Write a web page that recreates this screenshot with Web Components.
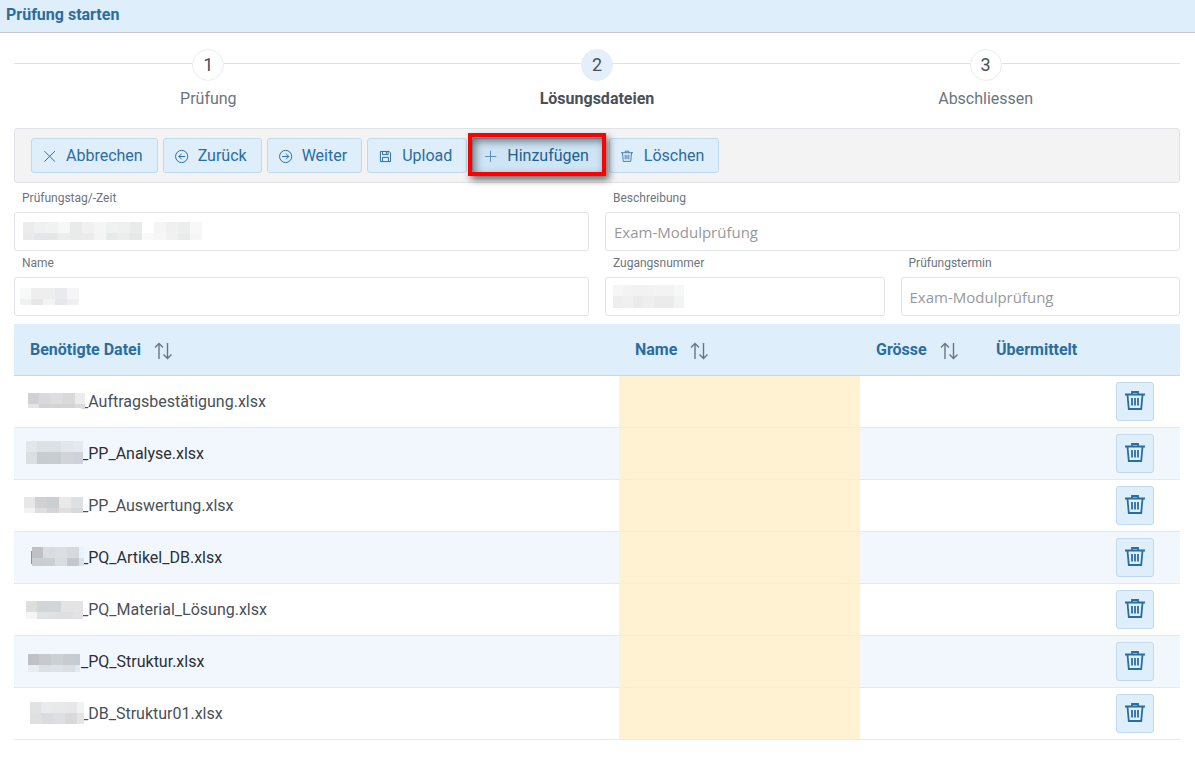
<!DOCTYPE html>
<html lang="de">
<head>
<meta charset="utf-8">
<meta name="viewport" content="width=device-width, initial-scale=1">
<title>Prüfung starten</title>
<style>
  :root {
    --accent: #2a6da0;
    --accent-bg: #dfeefb;
    --accent-line: #c0d9ec;
    --line: #dee2e6;
    --muted: #6c757d;
    --text: #495057;
  }
  body { margin: 0; background: #fff; color: var(--text); font: 16px/20px Roboto, "Liberation Sans", sans-serif; }
</style>
</head>
<body>
<exam-page></exam-page>

<script>
const define = (name, html, setup) => {
  const template = document.createElement('template');
  template.innerHTML = html;
  customElements.define(name, class extends HTMLElement {
    connectedCallback() {
      if (this.shadowRoot) return;
      const root = this.attachShadow({ mode: 'open' });
      root.append(template.content.cloneNode(true));
      if (setup) setup(this, root);
    }
  });
};

const ICONS = {
  close: '<path d="M2 3l15 15M17 3l-15 15"/>',
  plus: '<path d="M9.300 2.500v16M1.500 10.700h16"/>',
  left: '<circle cx="9.500" cy="10.700" r="8.700"/><path d="M14.500 10.700H5.500M9.500 6.700l-4 4 4 4"/>',
  right: '<circle cx="9.500" cy="10.700" r="8.700"/><path d="M4.500 10.700h9.500M10 6.700l4 4-4 4"/>',
  save: '<path d="M2 3.500h12.500l2 2v12.500h-14.500zM5 3.500v4.500h8v-4.500M10.500 4v3M5 18v-6h8.500v6"/>',
  trash: '<path d="M0 4.500h20M7 4V2h6v2M2.500 5l1.300 14h12.400l1.300-14M7 8v7.500M10 8v7.500M13 8v7.500"/>',
  sort: '<path d="M6 18V2.500M2 6.500l4-4 4 4M14.500 2v15.500M10.500 13.500l4 4 4-4"/>'
};

define('line-icon', `
  <style>
    :host { display: inline-block; width: 14px; height: 14px; flex: none; }
    svg { display: block; width: 100%; height: 100%; fill: none; stroke: currentColor; stroke-width: var(--stroke, 1.4); overflow: visible; }
  </style>
  <svg viewBox="0 0 20 20" aria-hidden="true"></svg>`,
  (host, root) => { root.querySelector('svg').innerHTML = ICONS[host.getAttribute('name')]; });

/* Obscured text: xs and ys list the tile edges, colors the fills row by row. */
define('masked-text', `
  <style>
    :host { display: block; }
    svg { display: block; }
  </style>
  <svg aria-hidden="true" shape-rendering="crispEdges"></svg>`,
  (host, root) => {
    const list = n => host.getAttribute(n).split(' ');
    const xs = list('xs').map(Number), ys = list('ys').map(Number), colors = list('colors');
    const svg = root.querySelector('svg'), cols = xs.length - 1;
    svg.setAttribute('width', xs[cols]);
    svg.setAttribute('height', ys[ys.length - 1]);
    svg.innerHTML = colors.map((c, i) => {
      const x = i % cols, y = Math.floor(i / cols);
      return `<rect x="${xs[x]}" y="${ys[y]}" width="${xs[x + 1] - xs[x]}" height="${ys[y + 1] - ys[y]}" fill="#${c}"/>`;
    }).join('');
  });

define('page-title', `
  <style>
    :host { display: block; background: var(--accent-bg); border-bottom: 1px solid #c4c8cc; padding: 5px 6px 7px; }
    h1 { margin: 0; font-size: 16px; line-height: 20px; font-weight: 700; color: var(--accent); }
  </style>
  <h1><slot></slot></h1>`);

define('step-list', `
  <style>
    :host { display: block; }
    ol { display: flex; margin: 0; padding: 0; list-style: none; }
  </style>
  <ol role="list"><slot></slot></ol>`);

define('step-item', `
  <style>
    :host { flex: 1; display: grid; grid-template-columns: 1fr 32px 1fr; row-gap: 8px; color: var(--muted); }
    .line { height: 1px; margin-top: 14px; background: var(--line); }
    .number { box-sizing: border-box; height: 32px; border: 1px solid #e9ecef; border-radius: 50%; font-size: 18px; line-height: 30px; text-align: center; color: var(--text); }
    .label { grid-column: 1 / -1; text-align: center; }
    :host([active]) .number { background: #e3f0fb; }
    :host([active]) .label { font-weight: 700; color: var(--text); }
  </style>
  <div class="line"></div><div class="number"></div><div class="line"></div>
  <div class="label"><slot></slot></div>`,
  (host, root) => {
    host.setAttribute('role', 'listitem');
    root.querySelector('.number').textContent = host.getAttribute('number');
  });

define('tool-bar', `
  <style>
    :host { display: flex; flex-wrap: wrap; gap: 5px; padding: 9px 16px; background: #f3f3f3; border: 1px solid var(--line); border-radius: 3px; }
  </style>
  <slot></slot>`);

define('action-button', `
  <style>
    :host { display: block; position: relative; }
    button { display: flex; align-items: center; gap: 9px; height: 35px; padding: 0 14px 0 11px; border: 1px solid var(--accent-line); border-radius: 3px; background: var(--accent-bg); color: var(--accent); font: inherit; cursor: pointer; }
    button:hover { background: #d0e6f7; }
    line-icon[name="trash"] { width: 12px; height: 12px; margin: 1px 2px 0 0; }
    :host([marked]) { z-index: 1; }
    :host([marked]) button { background: #cfe5f6; border-color: #9dc3df; color: #22608f; }
    :host([marked]) line-icon { color: #5a8fba; }
    :host([marked])::after { content: ""; position: absolute; inset: -5px -2px -3px -4px; border: 4px solid #f00; box-shadow: 3px 4px 7px rgba(0,0,0,.55), inset 3px 4px 8px rgba(0,0,0,.5); pointer-events: none; }
  </style>
  <button type="button"><line-icon></line-icon><slot></slot></button>`,
  (host, root) => {
    const icon = document.createElement('line-icon');
    icon.setAttribute('name', host.getAttribute('icon'));
    root.querySelector('line-icon').replaceWith(icon);
  });

define('form-field', `
  <style>
    :host { display: block; min-width: 0; }
    label { display: block; padding: 0 8px 2px; font-size: 12px; line-height: 24px; color: var(--muted); }
    .box { position: relative; }
    input { display: block; box-sizing: border-box; width: 100%; height: 39px; padding: 1px 8px 0; border: 1px solid #e2e3e8; border-radius: 3px; background: #fff; color: #96999d; font: 15px/20px "Open Sans", "Noto Sans", sans-serif; }
    ::slotted(*) { position: absolute; left: 0; top: 0; pointer-events: none; }
  </style>
  <label for="field"></label>
  <div class="box"><input id="field" type="text"><slot></slot></div>`,
  (host, root) => {
    root.querySelector('label').textContent = host.getAttribute('label');
    root.querySelector('input').value = host.getAttribute('value') || '';
  });

const FILES = [
  ['_Auftragsbestätigung.xlsx', '4 15 27 39 51 61', '11 22 26', 'd0d1d4 dadadc dedee1 d9d9d9 ececee e4e4e4 d3d3d4 d4d4d5 d3d3d4 dadbdc'],
  ['_PP_Analyse.xlsx', '2 13 25 37 49 59', '7 18 30', 'e2e7eb dce1e5 dae2e6 e2e7ed e4e9f2 dadfe2 c7cccf c8cdd0 d1d5da ced3d9'],
  ['_PP_Auswertung.xlsx', '0 11 23 35 47 59', '11 22 27', 'e7e7e8 d1d1d3 cccfd2 e9e9ea dfe0e5 f3f3f3 dededf d5d5d7 e0e0e1 d8d9dc'],
  ['_PQ_Artikel_DB.xlsx', '7 8 19 31 43 55 60', '9 13 20 26 28', 'f2f7fe bfc1c6 d9dde1 dcdfe2 d5dade e7f3fe b98a5c bfc1c6 d9dde1 dcdfe2 d5dade e7f3fe b98a5c cacdd2 cbcfd1 d8dde3 c5c7cc d9e1e9 f2f7fe cacdd2 cbcfd1 d8dde3 c5c7cc d9e1e9'],
  ['_PQ_Material_Lösung.xlsx', '2 13 25 37 49 59', '11 22 29', 'dededd d2d5d7 d3d6d9 e4e4e5 e4e4e6 f5f5f3 e1e2e4 dfe0e2 dfdfe1 e2e2e4'],
  ['_PQ_Struktur.xlsx', '4 15 27 39 51 56', '12 23 30', 'bfc1c6 c6c9cd cad0d4 c8cbd0 c5cbd3 e8edf2 dbe0e6 dde2e8 dadfe3 e2e8ef'],
  ['_DB_Struktur01.xlsx', '6 17 29 41 53 60', '8 19 30', 'e1e2e2 e9eaec e8e9eb e7e7e9 f1f2f2 e0e0e1 dbdcdf dedfe2 d9d9db e4e4e5']
];

define('file-table', `
  <style>
    :host { display: block; }
    table { width: 100%; table-layout: fixed; border-collapse: separate; border-spacing: 0; }
    th { box-sizing: border-box; height: 52px; padding: 0 16px; text-align: left; font-weight: 700; color: var(--accent); background: var(--accent-bg); border-bottom: 1px solid var(--accent-line); }
    th button { display: flex; align-items: center; gap: 12px; padding: 0; border: 0; background: none; color: inherit; font: inherit; cursor: pointer; }
    th line-icon { width: 20px; height: 20px; margin-top: 2px; color: var(--muted); }
    .name { width: 241px; } .size { width: 120px; } .sent { width: 120px; } .tools { width: 80px; }
    td { padding: 6px 16px; border-bottom: 1px solid #e4e9ed; }
    tr:nth-child(even) td { background: #f2f7fe; color: #2b3035; }
    tbody td.file { padding-left: 10px; }
    tbody tr td.mark { background: #fff2d3; border-color: #fbeccf; }
    .cell { display: flex; height: 39px; }
    .cell span { line-height: 39px; }
    masked-text { position: relative; flex: none; width: 60px; margin-right: -3px; }
    td button { display: flex; justify-content: center; width: 38px; height: 39px; padding: 6px 0 0; border: 1px solid var(--accent-line); border-radius: 3px; background: var(--accent-bg); color: var(--accent); cursor: pointer; }
    td line-icon { width: 20px; height: 22px; --stroke: 1.8; }
  </style>
  <table>
    <thead><tr>
      <th scope="col"><button type="button">Benötigte Datei<line-icon name="sort"></line-icon></button></th>
      <th scope="col" class="name"><button type="button">Name<line-icon name="sort"></line-icon></button></th>
      <th scope="col" class="size"><button type="button">Grösse<line-icon name="sort"></line-icon></button></th>
      <th scope="col" class="sent">Übermittelt</th>
      <th class="tools"></th>
    </tr></thead>
    <tbody></tbody>
  </table>`,
  (host, root) => {
    root.querySelector('tbody').innerHTML = FILES.map(([name, xs, ys, colors]) => `
      <tr>
        <td class="file"><div class="cell"><masked-text xs="${xs}" ys="${ys}" colors="${colors}"></masked-text><span>${name}</span></div></td>
        <td class="mark"></td><td></td><td></td>
        <td><button type="button" aria-label="Löschen"><line-icon name="trash"></line-icon></button></td>
      </tr>`).join('');
  });

define('exam-page', `
  <style>
    :host { display: block; }
    main { padding: 16px 15px 24px 14px; }
    tool-bar { margin-top: 19px; }
    .fields { display: grid; grid-template-columns: 1fr 1fr; column-gap: 16px; margin: 3px 0 8px; }
    .pair { display: grid; grid-template-columns: 1fr 1fr; column-gap: 16px; }
  </style>
  <page-title>Prüfung starten</page-title>
  <main>
    <step-list>
      <step-item number="1">Prüfung</step-item>
      <step-item number="2" active>Lösungsdateien</step-item>
      <step-item number="3">Abschliessen</step-item>
    </step-list>
    <tool-bar role="toolbar">
      <action-button icon="close">Abbrechen</action-button>
      <action-button icon="left">Zurück</action-button>
      <action-button icon="right">Weiter</action-button>
      <action-button icon="save">Upload</action-button>
      <action-button icon="plus" marked>Hinzufügen</action-button>
      <action-button icon="trash">Löschen</action-button>
    </tool-bar>
    <div class="fields">
      <form-field label="Prüfungstag/-Zeit">
        <masked-text xs="9 20 32 44 56 68 80 92 104 116 128 140 152 164 176 188" ys="10 21 28" colors="ececec eff1f1 f0f1f1 f5f8f7 eaeaeb f0f0f0 f5f5f5 eef2f0 eef1f0 eaeaea ffffff f5f5f5 f0f0f0 ededed f8f8f8 eaeaec e6e6e8 e5e6e8 ebecec e9eaeb ebebeb f4f4f4 e9e9e9 ebedec e6e7e9 f9f9f9 f4f7f6 f1f1f1 e9ebea f4f7f6"></masked-text>
      </form-field>
      <form-field label="Beschreibung" value="Exam-Modulprüfung"></form-field>
      <form-field label="Name">
        <masked-text xs="6 17 29 41 53 65" ys="11 22 28" colors="f7f9f8 eeeeef edefef e9eaed f5f5f6 f1f1f1 e7e7e9 f2f3f3 e7e7e9 f0f0f1"></masked-text>
      </form-field>
      <div class="pair">
        <form-field label="Zugangsnummer">
          <masked-text xs="8 18 28 38 49 59 69 79" ys="8 19 31" colors="f6f6f6 f3f3f3 f2f2f2 f2f2f2 f2f3f2 f3f3f3 f6f8f7 eeeeee f0f0f0 ebebeb eeeeee ebebeb ebebeb f2f4f3"></masked-text>
        </form-field>
        <form-field label="Prüfungstermin" value="Exam-Modulprüfung"></form-field>
      </div>
    </div>
    <file-table></file-table>
  </main>`);
</script>
</body>
</html>
